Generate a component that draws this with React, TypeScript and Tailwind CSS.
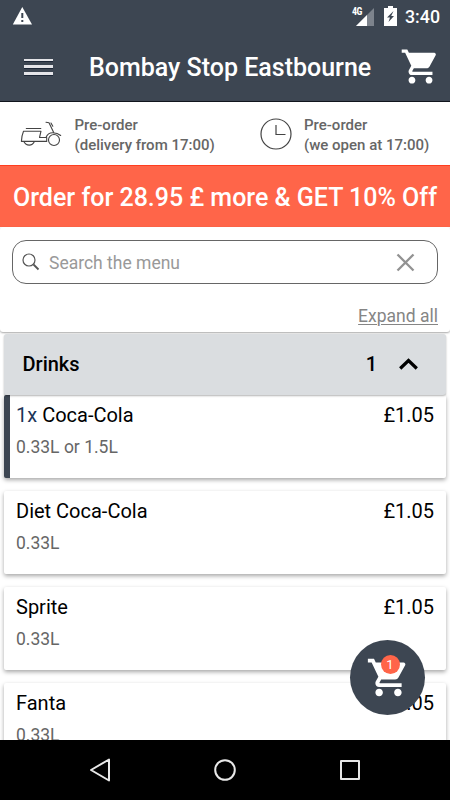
import React, { useState } from 'react';

interface MenuItem {
  name: string;
  description: string;
  price: string;
  quantity?: number;
}

const DRINKS: MenuItem[] = [
  { name: 'Coca-Cola', description: '0.33L or 1.5L', price: '£1.05', quantity: 1 },
  { name: 'Diet Coca-Cola', description: '0.33L', price: '£1.05' },
  { name: 'Sprite', description: '0.33L', price: '£1.05' },
  { name: 'Fanta', description: '0.33L', price: '£1.05' },
];

const CartIcon: React.FC<{ className?: string }> = ({ className }) => (
  <svg className={className} viewBox="0 0 24 24" fill="currentColor">
    <path d="M7 18c-1.1 0-1.99.9-1.99 2S5.9 22 7 22s2-.9 2-2-.9-2-2-2zM1 2v2h2l3.6 7.59-1.35 2.45c-.16.28-.25.61-.25.96 0 1.1.9 2 2 2h12v-2H7.42c-.14 0-.25-.11-.25-.25l.03-.12.9-1.63h7.45c.75 0 1.41-.41 1.75-1.03l3.58-6.49A1.003 1.003 0 0 0 20 4H5.21l-.94-2H1zm16 16c-1.1 0-1.99.9-1.99 2s.89 2 1.99 2 2-.9 2-2-.9-2-2-2z" />
  </svg>
);

const ScooterIcon: React.FC = () => (
  <svg className="h-[28px] w-[42px] shrink-0" viewBox="0 0 42 28" fill="none" stroke="#444" strokeWidth="1.1" strokeLinecap="round" strokeLinejoin="round">
    {/* Seat and body */}
    <path d="M6.300 8.500h14.500M3.500 11.200H21l-1.500 6.300h6.500M3.500 11.200C2.300 14 1.600 17.500 1.400 21.400h25.300v-3.900" />
    {/* Front mudguard */}
    <path d="M26 17.500c1.200-3 3.600-4.700 6.700-4.700 3.200 0 5.800.8 8 2.700" />
    {/* Handlebar */}
    <path d="M26 2.200l3 .5 4.700 9.800M31 3l1.800 3.200" />
    {/* Wheels */}
    <path d="M4 21.800c1 2.100 2.800 3.300 5.200 3.300s4.100-1.200 5.100-3.300" />
    <circle cx="34" cy="20" r="5.500" />
  </svg>
);

const StatusBar: React.FC = () => (
  <div className="flex h-8 items-center pl-[12px] pr-[10px]">
    <svg className="h-[18px] w-[20px]" viewBox="0 0 20 18">
      <path fill="#fff" d="M10.300 0 20 17.500H.8z" />
      <path fill="#3d4652" d="M9.300 6h2v5h-2zM9.300 13h2v2h-2z" />
    </svg>
    <div className="ml-auto flex items-center">
      <span className="-mr-[6px] -mt-[9px] font-['Roboto_Condensed',Roboto,sans-serif] text-[10px] font-bold leading-none tracking-[-0.4px]">4G</span>
      <svg className="mt-px h-[18px] w-[18px]" viewBox="0 0 18 18">
        <path fill="#7d838c" d="M18 0v18H0z" />
        <path fill="#fff" d="M11 7v11H0z" />
      </svg>
      <svg className="ml-[10px] h-[20px] w-[13px]" viewBox="0 0 13 20">
        <path fill="#fff" d="M4 0h5v2h4v18H0V2h4z" />
        <path fill="#3d4652" d="M9.500 5 3 11.500h3L4.500 16 10 10H7.200z" />
      </svg>
      <span className="ml-[8px] pt-px text-[17.800px] font-medium leading-none">3:40</span>
    </div>
  </div>
);

const MenuCard: React.FC<{ item: MenuItem }> = ({ item }) => (
  <li
    className={`h-[83px] shrink-0 rounded-[2px] bg-white pr-[12px] pt-[7px] shadow-[0_2px_4px_rgba(0,0,0,0.35)] ${
      item.quantity ? 'border-l-6 border-[#3d4652] pl-[6px]' : 'pl-[12px]'
    }`}
  >
    <div className="flex justify-between text-[20px] leading-[26px]">
      <span>
        {item.quantity && <span className="text-[#1d3557]">{item.quantity}x </span>}
        {item.name}
      </span>
      <span>{item.price}</span>
    </div>
    <p className="mt-[8px] text-[17.500px] leading-[22px] text-[#666]">{item.description}</p>
  </li>
);

const App: React.FC = () => {
  const [search, setSearch] = useState('');
  const [expanded, setExpanded] = useState(true);

  return (
    <div className="relative flex h-[800px] w-[450px] flex-col overflow-hidden bg-white font-[Roboto,sans-serif] text-black">
      {/* Header */}
      <header className="h-[102px] shrink-0 border-b border-[#10151d] bg-[#3d4652] text-white">
        <StatusBar />
        <div className="flex h-[69px] items-center pl-[24px] pr-[9px]">
          <button aria-label="Menu" className="flex w-[29px] flex-col gap-[4px]">
            <span className="h-[2px] bg-[#e4e4e8] shadow-[0_1px_0_#1c2636]" />
            <span className="h-[3px] bg-[#e4e4e8] shadow-[0_1px_0_#1c2636]" />
            <span className="h-[3px] bg-[#e4e4e8] shadow-[0_1px_0_#1c2636]" />
          </button>
          <h1 className="ml-[36px] whitespace-nowrap pt-[2px] text-[25px] font-medium leading-none">Bombay Stop Eastbourne</h1>
          <CartIcon className="ml-auto h-[41px] w-[41px] shrink-0" />
        </div>
      </header>

      {/* Delivery and opening times */}
      <section className="flex h-[63px] shrink-0 items-center whitespace-nowrap text-[15px] font-medium leading-[20.500px] text-[#666]">
        <div className="flex w-[260px] items-center pl-[20px]">
          <ScooterIcon />
          <p className="ml-[12.500px] pt-[3px]">Pre-order<br />(delivery from 17:00)</p>
        </div>
        <div className="flex items-center">
          <svg className="h-[32px] w-[32px]" viewBox="0 0 32 32" fill="none" stroke="#444" strokeWidth="1.200">
            <circle cx="16" cy="16" r="15" />
            <path d="M16 7v9.500h9.500" />
          </svg>
          <p className="ml-[12px] pt-[3px]">Pre-order<br />(we open at 17:00)</p>
        </div>
      </section>

      <div className="flex h-[62px] shrink-0 items-center justify-center whitespace-nowrap border-t border-[#ff3d1f] bg-[#ff6549] pt-[2px] text-[25px] font-medium text-white">
        Order for 28.95 £ more &amp; GET 10% Off
      </div>

      {/* Search */}
      <section className="z-10 flex h-[105px] shrink-0 flex-col rounded-[3px] bg-white px-[12px] pt-[13px] shadow-[0_1px_2px_rgba(0,0,0,0.35)]">
        <div className="flex h-[44px] items-center rounded-[14px] border border-[#666] pl-[9px] pr-[22.500px]">
          <svg className="h-[18px] w-[18px] shrink-0" viewBox="0 0 18 18" fill="none" stroke="#555" strokeWidth="1.200">
            <circle cx="7" cy="7" r="6" />
            <path strokeWidth="1.800" d="m11.500 11.500 5 5" />
          </svg>
          <input
            value={search}
            onChange={e => setSearch(e.target.value)}
            placeholder="Search the menu"
            className="ml-[9px] min-w-0 flex-1 pt-[2px] text-[17.500px] outline-none placeholder:text-[#999]"
          />
          <button aria-label="Clear" onClick={() => setSearch('')}>
            <svg className="h-[19px] w-[19px]" viewBox="0 0 19 19" stroke="#929292" strokeWidth="2.300">
              <path d="m1.500 1.500 16 16M17.500 1.500l-16 16" />
            </svg>
          </button>
        </div>
        <button className="ml-auto mt-[21px] text-[17.500px] leading-[22px] text-[#858585] underline decoration-1 underline-offset-2">
          Expand all
        </button>
      </section>

      {/* Category */}
      <main className="flex min-h-0 flex-1 flex-col overflow-hidden px-[4px] pt-[2px]">
        <button
          onClick={() => setExpanded(!expanded)}
          className="relative z-10 flex h-[61px] shrink-0 items-center rounded-[3px] bg-[#dadde0] pb-px pl-[18.500px] pr-[28px] text-[20px] font-medium shadow-[0_1px_2px_rgba(0,0,0,0.3)]"
        >
          <span>Drinks</span>
          <span className="ml-auto">1</span>
          <svg className="ml-[22px] h-[12px] w-[19px]" viewBox="0 0 19 12" fill="none" stroke="#000" strokeWidth="3.200">
            <path d="M1.200 10.500 9.500 2.500l8.300 8" />
          </svg>
        </button>
        {expanded && (
          <ul className="flex flex-col gap-[13px]">
            {DRINKS.map(item => (
              <MenuCard key={item.name} item={item} />
            ))}
          </ul>
        )}
      </main>

      {/* Android navigation */}
      <nav className="flex h-[60px] shrink-0 items-center bg-black pl-[90px]">
        <svg className="h-[24px] w-[20px]" viewBox="0 0 20 24" fill="none" stroke="#e8e8e8" strokeWidth="2" strokeLinejoin="round">
          <path d="M19 1.500v21L1 12z" />
        </svg>
        <svg className="ml-[104px] h-[22px] w-[22px]" viewBox="0 0 22 22" fill="none" stroke="#e8e8e8" strokeWidth="2">
          <circle cx="11" cy="11" r="9.800" />
        </svg>
        <span className="ml-[104px] h-[20px] w-[20px] rounded-[1px] border-2 border-[#e8e8e8]" />
      </nav>

      {/* Floating basket */}
      <button
        aria-label="Basket"
        className="absolute bottom-[85px] right-[25px] z-20 flex h-[75px] w-[75px] items-center justify-center rounded-full bg-[#3d4652] pl-[2px] text-white"
      >
        <CartIcon className="h-[45px] w-[45px]" />
        <span className="absolute left-[30.500px] top-[15px] flex h-[19px] w-[19px] items-center justify-center rounded-full bg-[#ff6549] text-[13px] leading-none">
          1
        </span>
      </button>
    </div>
  );
};

export default App;
